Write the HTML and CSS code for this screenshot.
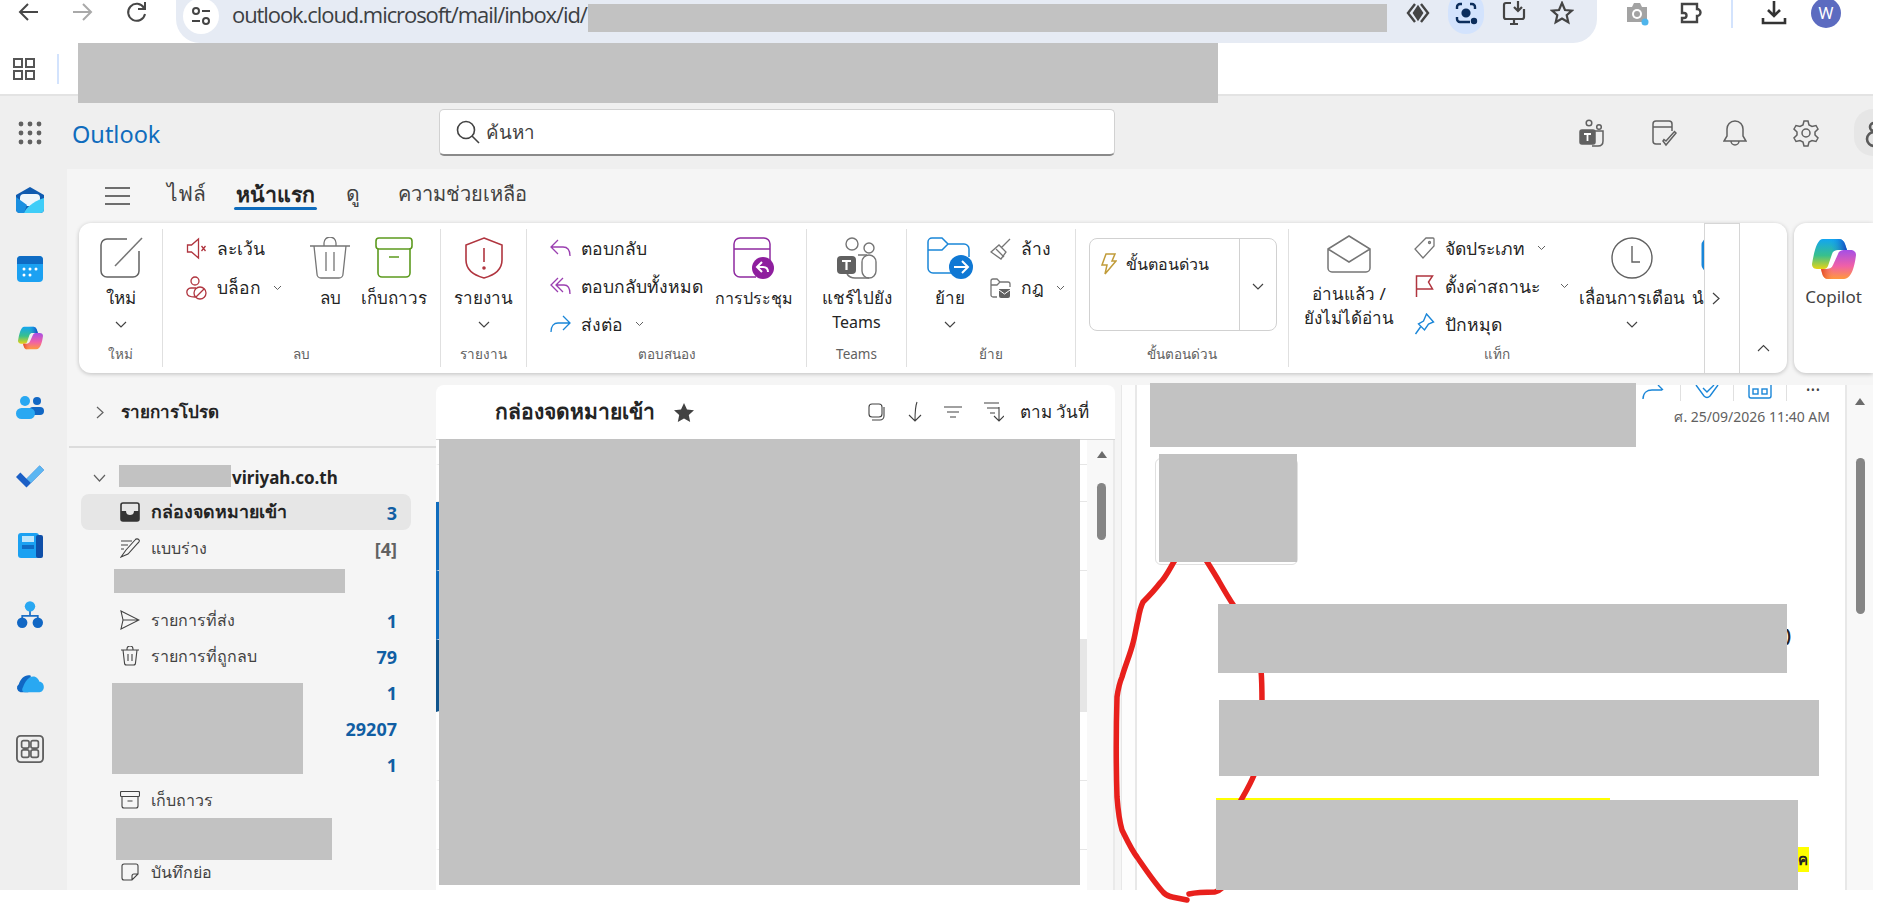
FILE: index.html
```html
<!DOCTYPE html>
<html lang="th">
  <head>
    <meta charset="UTF-8" />
    <title>Outlook</title>
    <link rel="stylesheet" href="styles.css">
  </head>
  <body>
    <svg class="defs" width="0" height="0">
      <defs>
        <linearGradient id="cpA" x1="0" y1="0" x2="0" y2="1"><stop offset="0" stop-color="#12a5f2"/><stop offset=".55" stop-color="#38c08c"/><stop offset="1" stop-color="#e8d414"/></linearGradient>
        <linearGradient id="cpB" x1="0" y1="0" x2="0" y2="1"><stop offset="0" stop-color="#a44fe6"/><stop offset=".55" stop-color="#f060a8"/><stop offset="1" stop-color="#ff9a3c"/></linearGradient>
        <linearGradient id="cpC" x1="0" y1="0" x2="1" y2="0"><stop offset="0" stop-color="#e0481f"/><stop offset="1" stop-color="#ff8a4a" stop-opacity="0"/></linearGradient>
        <linearGradient id="cpD" x1="0" y1="0" x2="1" y2="0"><stop offset="0" stop-color="#12a5f2" stop-opacity="0"/><stop offset="1" stop-color="#1540c0"/></linearGradient>
        <symbol id="copilot" viewBox="0 0 44 40">
          <path d="M11 0H27c3 0 5 2 6 5l2 6H26c-3 0-5 1-6 4l-4 12c-1 2-2 3-4 3H5c-4 0-5-3-5-5C2 13 5 0 11 0z" fill="url(#cpA)"/>
          <path d="M18 0H27c3 0 5 2 6 5l2 6H26c-3 0-4 1-5 2z" fill="url(#cpD)"/>
          <path d="M33 11h5c4 0 6 2 6 5-1 9-4 24-12 24H16c-3 0-5-2-6-6l-1-4h5c3 0 6-1 7-4l5-11c1-3 3-4 7-4z" fill="url(#cpB)"/>
          <path d="M9 30h5c3 0 6-1 7-4l1-2v16h-6c-3 0-5-2-6-6z" fill="url(#cpC)"/>
        </symbol>
      </defs>
    </svg>

    <div class="shot">
      <header class="toolbar">
        <svg class="tb-btn" viewBox="0 0 24 24" fill="none" stroke="#474747" stroke-width="2"><path d="M21 12H4M11 4l-8 8 8 8"/></svg>
        <svg class="tb-btn" viewBox="0 0 24 24" fill="none" stroke="#a9a9a9" stroke-width="2"><path d="M3 12h17M13 4l8 8-8 8"/></svg>
        <svg class="tb-btn" viewBox="0 0 24 24" fill="none" stroke="#474747" stroke-width="2"><path d="M19 8a8.500 8.500 0 1 0 1 6M20 2v7h-7"/></svg>
        <div class="omnibox">
          <span class="site-info">
            <svg width="20" height="20" viewBox="0 0 20 20" fill="none" stroke="#444" stroke-width="2"><circle cx="5" cy="5" r="3"/><path d="M11 5h8M1 15h8"/><circle cx="15" cy="15" r="3"/></svg>
          </span>
          <span class="url">outlook.cloud.microsoft/mail/inbox/id/</span>
          <span class="omni-icons">
            <svg width="24" height="24" viewBox="0 0 24 24" fill="none" stroke="#444" stroke-width="2.400"><path d="M9 3 2 12l7 9M15 3l7 9-7 9"/><path d="M12 6l4 6-4 6-4-6z" fill="#444"/></svg>
            <span class="lens"><svg width="24" height="24" viewBox="0 0 24 24" fill="none" stroke="#0b2d5c" stroke-width="2.400"><path d="M3 8V6a3 3 0 0 1 3-3h2M16 3h2a3 3 0 0 1 3 3v2M3 16v2a3 3 0 0 0 3 3h10"/><circle cx="12" cy="12" r="3.400" fill="#0b2d5c"/><circle cx="20" cy="20" r="2" fill="#0b2d5c"/></svg></span>
            <svg width="24" height="26" viewBox="0 0 24 26" fill="none" stroke="#444" stroke-width="2.200"><path d="M9 3H4a2 2 0 0 0-2 2v12a2 2 0 0 0 2 2h16a2 2 0 0 0 2-2V9M8 24h8M12 19v5M16 1v9M12 7l4 4 4-4"/></svg>
            <svg width="24" height="24" viewBox="0 0 24 24" fill="none" stroke="#444" stroke-width="2.200"><path d="M12 2l3 7 7 .6-5.300 4.600 1.600 7L12 17.500 5.700 21.200l1.600-7L2 9.600 9 9z"/></svg>
          </span>
        </div>
        <span class="tb-right">
          <svg width="24" height="26" viewBox="0 0 24 26"><path d="M2 7h5l2-4h6l2 4h5v15H2z" fill="#a3a3a3"/><circle cx="12" cy="14" r="5" fill="#fff"/><circle cx="12" cy="14" r="3" fill="#a3a3a3"/><circle cx="20" cy="22" r="3.500" fill="#4fb5ec"/></svg>
          <svg width="24" height="24" viewBox="0 0 24 24" fill="none" stroke="#444" stroke-width="2.400"><path d="M3 3h15v5a3 3 0 0 1 0 7v6H3v-4h2a2.500 2.500 0 0 0 0-5H3z"/></svg>
          <span class="tb-sep"></span>
          <svg width="26" height="26" viewBox="0 0 26 26" fill="none" stroke="#333" stroke-width="2.600"><path d="M13 1v15M7 10l6 6 6-6M2 18v5h22v-5"/></svg>
          <span class="avatar">W</span>
        </span>
      </header>

      <nav class="bookmarks">
        <svg width="22" height="22" viewBox="0 0 22 22" fill="none" stroke="#555" stroke-width="2"><rect x="1" y="1" width="8" height="8"/><rect x="13" y="1" width="8" height="8"/><rect x="1" y="13" width="8" height="8"/><rect x="13" y="13" width="8" height="8"/></svg>
        <span class="bm-sep"></span>
      </nav>

      <div class="app-header">
        <svg class="waffle" width="24" height="24" viewBox="0 0 24 24" fill="#616161"><circle cx="3" cy="3" r="2.400"/><circle cx="12" cy="3" r="2.400"/><circle cx="21" cy="3" r="2.400"/><circle cx="3" cy="12" r="2.400"/><circle cx="12" cy="12" r="2.400"/><circle cx="21" cy="12" r="2.400"/><circle cx="3" cy="21" r="2.400"/><circle cx="12" cy="21" r="2.400"/><circle cx="21" cy="21" r="2.400"/></svg>
        <span class="brand">Outlook</span>
        <div class="search">
          <svg width="24" height="24" viewBox="0 0 24 24" fill="none" stroke="#424242" stroke-width="1.600"><circle cx="10" cy="10" r="8.500"/><path d="M16 16l7 7"/></svg>
          <span>ค้นหา</span>
        </div>
        <div class="head-icons">
          <svg width="26" height="28" viewBox="0 0 26 28" fill="none" stroke="#616161" stroke-width="1.500"><circle cx="10" cy="4" r="2.800"/><circle cx="20" cy="8" r="2.300"/><path d="M15 12h9v10c0 3-2 5-5 5h-6"/><rect x="1" y="11" width="15" height="14" rx="2" fill="#616161"/><path d="M5 15h7M8.500 15v7" stroke="#fff" stroke-width="1.800"/></svg>
          <svg width="26" height="28" viewBox="0 0 26 28" fill="none" stroke="#616161" stroke-width="1.500"><path d="M10 25H5a3 3 0 0 1-3-3V5a3 3 0 0 1 3-3h13a3 3 0 0 1 3 3v7M2 8h19"/><path d="M12 22l3 4 10-12-1.500-1.500L15 22l-2-1.500z"/></svg>
          <svg width="24" height="28" viewBox="0 0 24 28" fill="none" stroke="#616161" stroke-width="1.500"><path d="M12 2c-5 0-8 4-8 8v7l-3 5h22l-3-5v-7c0-4-3-8-8-8zM8 22a4 4 0 0 0 8 0"/></svg>
          <svg width="26" height="28" viewBox="0 0 26 28" fill="none" stroke="#616161" stroke-width="1.500"><circle cx="13" cy="14" r="4"/><path d="M11 2h4l1 4 3 1.500 4-1 2 3.500-3 3v3l3 3-2 3.500-4-1-3 1.500-1 4h-4l-1-4-3-1.500-4 1-2-3.500 3-3v-3l-3-3 2-3.500 4 1L10 6z"/></svg>
        </div>
        <div class="me-btn">
          <svg width="30" height="30" viewBox="0 0 30 30" fill="none" stroke="#5a5a5a" stroke-width="2.600"><circle cx="15" cy="9" r="4"/><circle cx="15" cy="21" r="7"/></svg>
        </div>
      </div>

      <div class="app-body">
        <aside class="rail">
          <svg width="28" height="26" viewBox="0 0 28 26"><path d="M14 0 28 8v14a4 4 0 0 1-4 4H4a4 4 0 0 1-4-4V8z" fill="#0f5bb0"/><rect x="4" y="7" width="20" height="12" rx="4" fill="#eef6fc"/><path d="M0 10l11 8-3 8H4a4 4 0 0 1-4-4z" fill="#1a8fe0"/><path d="M28 11v11a4 4 0 0 1-4 4H8c2-5 8-11 20-15z" fill="#3fcdf8"/></svg>
          <svg width="26" height="26" viewBox="0 0 26 26"><rect width="26" height="26" rx="4" fill="#1ba1f2"/><path d="M0 8V4a4 4 0 0 1 4-4h18a4 4 0 0 1 4 4v4z" fill="#0f6cc4"/><g fill="#fff"><circle cx="7" cy="13" r="1.500"/><circle cx="13" cy="13" r="1.500"/><circle cx="19" cy="13" r="1.500"/><circle cx="7" cy="19" r="1.500"/><circle cx="13" cy="19" r="1.500"/></g></svg>
          <svg width="25" height="24"><use href="#copilot"/></svg>
          <svg width="28" height="23" viewBox="0 0 28 23"><circle cx="21" cy="5" r="4" fill="#1167c4"/><rect x="13" y="11" width="15" height="8" rx="4" fill="#1167c4"/><circle cx="9" cy="5" r="5" fill="#29a8f2"/><rect x="0" y="12" width="19" height="11" rx="5.500" fill="#29a8f2"/></svg>
          <svg width="28" height="24" viewBox="0 0 32 26"><path d="M0 14l5-5 7 7L27 1l5 5-20 20z" fill="#1b5fc6"/><path d="M12 16 27 1l5 5-15 15z" fill="#5cb6f2"/></svg>
          <svg width="25" height="25" viewBox="0 0 25 25"><rect width="21" height="25" rx="3" fill="#1ba1f2"/><rect x="18" y="2" width="7" height="23" rx="2" fill="#0f4fa8"/><rect x="4" y="3" width="12" height="6" fill="#bfe6fb"/><rect x="4" y="12" width="12" height="4" fill="#0f6cc4"/></svg>
          <svg width="26" height="28" viewBox="0 0 30 32"><path d="M15 8v8M6 22v-5h18v5" fill="none" stroke="#1b6fc6" stroke-width="2"/><circle cx="15" cy="6" r="6" fill="#29a8f2"/><circle cx="6" cy="25" r="6" fill="#1167c4"/><circle cx="24" cy="25" r="6" fill="#1167c4"/></svg>
          <svg width="28" height="19" viewBox="0 0 32 22"><path d="M5 21a5 5 0 0 1-2-9C5 5 11 0 17 2l-3 19z" fill="#1167c4"/><path d="M10 21c-3 0-4-3-2-6 2-5 6-13 13-12 3 1 5 3 6 6 3 0 5 3 5 6s-2 6-5 6z" fill="#29a8f2"/></svg>
          <svg class="rail-apps" width="28" height="28" viewBox="0 0 30 30" fill="none" stroke="#616161" stroke-width="1.800"><rect x="1" y="1" width="28" height="28" rx="4" stroke-width="2"/><rect x="6" y="6" width="8" height="8" rx="2"/><rect x="16" y="6" width="8" height="8" rx="2"/><rect x="6" y="16" width="8" height="8" rx="2"/><rect x="16" y="16" width="8" height="8" rx="2"/></svg>
        </aside>

        <main class="main">
          <div class="tabs">
            <svg class="burger" width="25" height="18" viewBox="0 0 25 18" stroke="#424242" stroke-width="1.500"><path d="M0 1h25M0 9h25M0 17h25"/></svg>
            <span class="tab tab-file">ไฟล์</span>
            <span class="tab tab-home">หน้าแรก</span>
            <span class="tab tab-view">ดู</span>
            <span class="tab tab-help">ความช่วยเหลือ</span>
          </div>

          <div class="ribbon-row">
            <section class="ribbon">
              <div class="group g-new">
                <div class="group-body">
                  <div class="big w-new">
                    <svg class="big-icon" width="44" height="42" viewBox="0 0 44 42" fill="none" stroke="#616161" stroke-width="1.500"><path d="M28 2H8a6 6 0 0 0-6 6v26a6 6 0 0 0 6 6h26a6 6 0 0 0 6-6V14"/><path d="M43 1 16 29" stroke="#757575"/></svg>
                    <span class="big-label">ใหม่</span>
                    <svg class="chev" width="12" height="8" viewBox="0 0 12 8"><path d="M1 1l5 5 5-5"/></svg>
                  </div>
                </div>
                <div class="group-name">ใหม่</div>
              </div>

              <div class="group g-delete">
                <div class="group-body">
                  <div class="stack s-delete">
                    <div class="cmd"><svg width="20" height="24" viewBox="0 0 20 24" fill="none" stroke="#b0353f" stroke-width="1.300"><path d="M1 8v7h4l7 6V2L5 8z"/><path d="M15 9l4 5M19 9l-4 5"/></svg><span>ละเว้น</span></div>
                    <div class="cmd"><svg width="21" height="24" viewBox="0 0 21 24" fill="none" stroke="#b0353f" stroke-width="1.300"><circle cx="9" cy="5" r="4"/><path d="M10 12H5a4 4 0 0 0-4 5c0 3 3 4 8 4"/><circle cx="14" cy="17" r="6"/><path d="M10 21l8-8"/></svg><span>บล็อก</span><svg class="chev-sm" width="9" height="6" viewBox="0 0 9 6"><path d="M1 1l3.500 3.500L8 1"/></svg></div>
                  </div>
                  <div class="big w-trash">
                    <svg class="big-icon" width="40" height="42" viewBox="0 0 40 42" fill="none" stroke="#757575" stroke-width="1.300"><path d="M0 9h40M14 9V6a6 6 0 0 1 12 0v3M4 9l3 28a4 4 0 0 0 4 4h18a4 4 0 0 0 4-4l3-28M16 15v19M24 15v19"/></svg>
                    <span class="big-label">ลบ</span>
                  </div>
                  <div class="big w-arch">
                    <svg class="big-icon" width="38" height="42" viewBox="0 0 38 42" fill="none" stroke="#5c9a1e" stroke-width="1.600"><rect x="1" y="1" width="36" height="11" rx="3"/><path d="M3 12v24a4 4 0 0 0 4 4h24a4 4 0 0 0 4-4V12M14 20h10"/></svg>
                    <span class="big-label">เก็บถาวร</span>
                  </div>
                </div>
                <div class="group-name">ลบ</div>
              </div>

              <div class="group g-report">
                <div class="group-body">
                  <div class="big w-report">
                    <svg class="big-icon" width="40" height="42" viewBox="0 0 40 42" fill="none" stroke="#b0353f" stroke-width="1.600"><path d="M20 1l18 7v15c0 9-7 15-18 18C9 38 2 32 2 23V8z"/><path d="M20 11v14"/><circle cx="20" cy="31" r="1" fill="#b0353f"/></svg>
                    <span class="big-label">รายงาน</span>
                    <svg class="chev" width="12" height="8" viewBox="0 0 12 8"><path d="M1 1l5 5 5-5"/></svg>
                  </div>
                </div>
                <div class="group-name">รายงาน</div>
              </div>

              <div class="group g-respond">
                <div class="group-body">
                  <div class="stack s-respond">
                    <div class="cmd"><svg width="21" height="20" viewBox="0 0 21 20" fill="none" stroke="#9a3fb0" stroke-width="1.300"><path d="M8 2 1 9l7 7M1 9h12c4 0 7 3 7 9"/></svg><span>ตอบกลับ</span></div>
                    <div class="cmd"><svg width="21" height="20" viewBox="0 0 21 20" fill="none" stroke="#9a3fb0" stroke-width="1.300"><path d="M8 2 1 9l7 7M13 2 6 9l7 7M6 9h8c4 0 6 3 6 9"/></svg><span>ตอบกลับทั้งหมด</span></div>
                    <div class="cmd"><svg width="21" height="20" viewBox="0 0 21 20" fill="none" stroke="#1a86d8" stroke-width="1.300"><path d="M13 2l7 7-7 7M20 9H8c-4 0-7 3-7 9"/></svg><span>ส่งต่อ</span><svg class="chev-sm" width="9" height="6" viewBox="0 0 9 6"><path d="M1 1l3.500 3.500L8 1"/></svg></div>
                  </div>
                  <div class="big w-meet">
                    <svg class="big-icon" width="42" height="42" viewBox="0 0 42 42"><g fill="none" stroke="#8e2aa0" stroke-width="1.500"><path d="M23 40H7a6 6 0 0 1-6-6V7a6 6 0 0 1 6-6h24a6 6 0 0 1 6 6v17M1 12h36"/></g><circle cx="30" cy="31" r="11" fill="#8e1e9e"/><path d="M29 25l-5 5 5 5M24 30h6c3 0 5 2 5 5" fill="none" stroke="#fff" stroke-width="2"/></svg>
                    <span class="big-label strong">การประชุม</span>
                  </div>
                </div>
                <div class="group-name">ตอบสนอง</div>
              </div>

              <div class="group g-teams">
                <div class="group-body">
                  <div class="big w-teams">
                    <svg class="big-icon" width="40" height="42" viewBox="0 0 40 42" fill="none" stroke="#757575" stroke-width="1.400"><circle cx="15" cy="7" r="6"/><circle cx="32" cy="11" r="5"/><rect x="25" y="18" width="14" height="23" rx="7"/><path d="M21 18h9M10 37c2 3 4 4 8 4h14"/><rect y="19" width="19" height="18" rx="4" fill="#616161" stroke="none"/><path d="M5 24h9M9.500 24v9" stroke="#fff" stroke-width="2.200"/></svg>
                    <span class="big-label">แชร์ไปยัง</span>
                    <span class="big-label lat">Teams</span>
                  </div>
                </div>
                <div class="group-name">Teams</div>
              </div>

              <div class="group g-move">
                <div class="group-body">
                  <div class="big w-move">
                    <svg class="big-icon" width="46" height="42" viewBox="0 0 46 42"><path d="M26 36H6a5 5 0 0 1-5-5V5a4 4 0 0 1 4-4h10l6 6-6 6H1M21 7h16a5 5 0 0 1 5 5v8" fill="none" stroke="#1a86d8" stroke-width="1.500"/><circle cx="34" cy="30" r="12" fill="#0f78d4"/><path d="M27 30h14M35 24l6 6-6 6" fill="none" stroke="#fff" stroke-width="2"/></svg>
                    <span class="big-label">ย้าย</span>
                    <svg class="chev" width="12" height="8" viewBox="0 0 12 8"><path d="M1 1l5 5 5-5"/></svg>
                  </div>
                  <div class="stack s-move">
                    <div class="cmd"><svg width="21" height="22" viewBox="0 0 21 22" fill="none" stroke="#757575" stroke-width="1.300"><path d="M20 1 11 10M1 14l8-7 7 7-5 7z"/><path d="M6 11l8 8"/></svg><span>ล้าง</span></div>
                    <div class="cmd"><svg width="21" height="20" viewBox="0 0 21 20"><path d="M7 19H3a2 2 0 0 1-2-2V3a2 2 0 0 1 2-2h4l3 3-3 3H1M10 4h8a2 2 0 0 1 2 2v3" fill="none" stroke="#757575" stroke-width="1.300"/><path d="M9 11h11v7a2 2 0 0 1-2 2h-7a2 2 0 0 1-2-2z" fill="#616161"/><path d="M9 12l5.500 4 5.500-4" fill="none" stroke="#fff"/></svg><span>กฎ</span><svg class="chev-sm" width="9" height="6" viewBox="0 0 9 6"><path d="M1 1l3.500 3.500L8 1"/></svg></div>
                  </div>
                </div>
                <div class="group-name">ย้าย</div>
              </div>

              <div class="group g-quick">
                <div class="group-body">
                  <div class="quick-box">
                    <div class="quick-list">
                      <svg width="16" height="22" viewBox="0 0 16 22" fill="none" stroke="#c19c3a" stroke-width="1.500"><path d="M5 1h9l-3 7h4L4 21l2-9H1z"/></svg>
                      <span>ขั้นตอนด่วน</span>
                    </div>
                    <div class="quick-more"><svg class="chev" width="12" height="8" viewBox="0 0 12 8"><path d="M1 1l5 5 5-5"/></svg></div>
                  </div>
                </div>
                <div class="group-name">ขั้นตอนด่วน</div>
              </div>

              <div class="group g-tags">
                <div class="group-body">
                  <div class="big w-read">
                    <svg class="big-icon env" width="44" height="38" viewBox="0 0 44 38" fill="none" stroke="#757575" stroke-width="1.500"><path d="M1 14 22 1l21 13v19a4 4 0 0 1-4 4H5a4 4 0 0 1-4-4zM1 14l21 13 21-13"/></svg>
                    <span class="big-label">อ่านแล้ว /</span>
                    <span class="big-label">ยังไม่ได้อ่าน</span>
                  </div>
                  <div class="stack s-tags">
                    <div class="cmd"><svg width="21" height="22" viewBox="0 0 21 22" fill="none" stroke="#757575" stroke-width="1.300"><path d="M12 1h7a1 1 0 0 1 1 1v7L9 21 1 12z"/><circle cx="15.500" cy="5.500" r="1"/></svg><span>จัดประเภท</span><svg class="chev-sm" width="9" height="6" viewBox="0 0 9 6"><path d="M1 1l3.500 3.500L8 1"/></svg></div>
                    <div class="cmd"><svg width="18" height="22" viewBox="0 0 18 22" fill="none" stroke="#b0353f" stroke-width="1.500"><path d="M1 22V1h16l-4 6 4 7H1"/></svg><span>ตั้งค่าสถานะ</span><svg class="chev-sm far" width="9" height="6" viewBox="0 0 9 6"><path d="M1 1l3.500 3.500L8 1"/></svg></div>
                    <div class="cmd"><svg width="20" height="22" viewBox="0 0 20 22" fill="none" stroke="#1a86d8" stroke-width="1.400"><path d="M12 1l7 8-5 2-4 6-6-6 5-3zM6 14l-5 7"/></svg><span>ปักหมุด</span></div>
                  </div>
                  <div class="big w-snooze">
                    <svg class="big-icon" width="42" height="42" viewBox="0 0 42 42" fill="none" stroke="#616161" stroke-width="1.400"><circle cx="21" cy="21" r="20"/><path d="M21 9v16h8"/></svg>
                    <span class="big-label">เลื่อนการเตือน</span>
                    <svg class="chev" width="12" height="8" viewBox="0 0 12 8"><path d="M1 1l5 5 5-5"/></svg>
                  </div>
                  <div class="big w-next">
                    <svg class="big-icon" width="42" height="42" viewBox="0 0 42 42" fill="none" stroke="#1a86d8" stroke-width="3"><rect x="2" y="3" width="36" height="30" rx="5"/></svg>
                    <span class="big-label">นำกลับ</span>
                  </div>
                </div>
                <div class="group-name">แท็ก</div>
              </div>

              <div class="ribbon-scroll"><svg width="9" height="13" viewBox="0 0 9 13" fill="none" stroke="#424242" stroke-width="1.200"><path d="M1 1l6 5.500L1 12"/></svg></div>
              <div class="ribbon-collapse"><svg width="13" height="8" viewBox="0 0 13 8" fill="none" stroke="#424242" stroke-width="1.100"><path d="M1 7l5.500-5.500L12 7"/></svg></div>
            </section>

            <section class="copilot-card">
              <svg width="44" height="40"><use href="#copilot"/></svg>
              <span>Copilot</span>
            </section>
          </div>

          <div class="panes">
            <aside class="folders">
              <div class="fav-row">
                <svg width="9" height="13" viewBox="0 0 9 13" fill="none" stroke="#616161" stroke-width="1.200"><path d="M1 1l6 5.500L1 12"/></svg>
                <span>รายการโปรด</span>
              </div>
              <div class="account-row">
                <svg width="13" height="9" viewBox="0 0 13 9" fill="none" stroke="#616161" stroke-width="1.200"><path d="M1 1l5.500 6L12 1"/></svg>
                <span>viriyah.co.th</span>
              </div>
              <ul class="folder-list">
                <li class="folder active">
                  <svg width="20" height="20" viewBox="0 0 20 20"><path d="M3 1h14a2 2 0 0 1 2 2v14a2 2 0 0 1-2 2H3a2 2 0 0 1-2-2V3a2 2 0 0 1 2-2z" fill="none" stroke="#333" stroke-width="1.600"/><path d="M1 9h5c0 3 2 4 4 4s4-1 4-4h5v8a2 2 0 0 1-2 2H3a2 2 0 0 1-2-2z" fill="#333"/></svg>
                  <span class="folder-name">กล่องจดหมายเข้า</span><span class="count">3</span>
                </li>
                <li class="folder">
                  <svg width="20" height="20" viewBox="0 0 20 20" fill="none" stroke="#424242" stroke-width="1.100"><path d="M19 2c-1-1.500-3-1.500-4 0L6 12l-5 7 7-3 10-11c1-1 2-2 1-3zM1 3h11M1 7h7M1 11h3"/></svg>
                  <span class="folder-name">แบบร่าง</span><span class="count muted">[4]</span>
                </li>
                <li class="folder"></li>
                <li class="folder">
                  <svg width="20" height="20" viewBox="0 0 20 20" fill="none" stroke="#424242" stroke-width="1.100"><path d="M1 1l18 9L1 19l2-9zM3 10h16"/></svg>
                  <span class="folder-name">รายการที่ส่ง</span><span class="count">1</span>
                </li>
                <li class="folder">
                  <svg width="20" height="20" viewBox="0 0 20 20" fill="none" stroke="#424242" stroke-width="1.100"><path d="M1 4h18M7 4V3a3 3 0 0 1 6 0v1M3 4l1.500 13a2 2 0 0 0 2 2h7a2 2 0 0 0 2-2L17 4M8 8v7M12 8v7"/></svg>
                  <span class="folder-name">รายการที่ถูกลบ</span><span class="count">79</span>
                </li>
                <li class="folder"><span class="folder-name"></span><span class="count">1</span></li>
                <li class="folder"><span class="folder-name"></span><span class="count">29207</span></li>
                <li class="folder"><span class="folder-name"></span><span class="count">1</span></li>
                <li class="folder">
                  <svg width="20" height="18" viewBox="0 0 20 18" fill="none" stroke="#424242" stroke-width="1.100"><rect x=".5" y=".5" width="19" height="5" rx="1"/><path d="M2 5.500V15a2 2 0 0 0 2 2h12a2 2 0 0 0 2-2V5.500M7.500 10h5"/></svg>
                  <span class="folder-name">เก็บถาวร</span>
                </li>
                <li class="folder"></li>
                <li class="folder">
                  <svg width="18" height="18" viewBox="0 0 18 18" fill="none" stroke="#424242" stroke-width="1.100"><path d="M11 17H3a2 2 0 0 1-2-2V3a2 2 0 0 1 2-2h12a2 2 0 0 1 2 2v8zM11 17v-4a2 2 0 0 1 2-2h4"/></svg>
                  <span class="folder-name">บันทึกย่อ</span>
                </li>
              </ul>
            </aside>

            <section class="msg-list">
              <div class="msg-head">
                <span class="msg-title">กล่องจดหมายเข้า</span>
                <svg class="star" width="20" height="19" viewBox="0 0 20 19" fill="#424242"><path d="M10 0l3 6.500 7 .8-5.200 4.700L16.200 19 10 15.400 3.800 19l1.400-7L0 7.300l7-.8z"/></svg>
                <div class="msg-tools">
                  <svg width="18" height="18" viewBox="0 0 18 18" fill="none" stroke="#424242" stroke-width="1.100"><rect x="1" y="1" width="13" height="13" rx="3"/><path d="M16 4v9a4 4 0 0 1-4 4H4"/></svg>
                  <svg width="14" height="22" viewBox="0 0 14 22" fill="none" stroke="#424242" stroke-width="1.100"><path d="M9 1C7 6 7 12 7 20M1 14l6 6 6-6"/></svg>
                  <svg width="18" height="12" viewBox="0 0 18 12" stroke="#424242" stroke-width="1.100"><path d="M0 1h18M3 6h12M6 11h6"/></svg>
                  <svg width="20" height="20" viewBox="0 0 20 20" fill="none" stroke="#424242" stroke-width="1.100"><path d="M0 1h15M3 6h12M6 11h5M15 5v14M10 14l5 5 5-5"/></svg>
                  <span>ตาม วันที่</span>
                </div>
              </div>
              <div class="msg-body">
                <ul class="msg-rows">
                  <li class="msg r-a"></li>
                  <li class="msg r-b"></li>
                  <li class="msg r-c unread"></li>
                  <li class="msg r-c unread"></li>
                  <li class="msg r-d unread selected"></li>
                  <li class="msg r-c"></li>
                  <li class="msg r-c"></li>
                </ul>
                <div class="scroller list-scroller">
                  <span class="sc-arrow"></span>
                  <span class="sc-thumb"></span>
                </div>
              </div>
            </section>

            <section class="reader">
              <div class="reader-edge"></div>
              <div class="reader-main">
                <div class="read-actions">
                  <span class="act"><svg width="24" height="14" viewBox="0 0 24 14" fill="none" stroke="#1a86d8" stroke-width="1.400"><path d="M1 14c0-6 4-9 9-9h10M16 0l5 5"/></svg></span>
                  <span class="act"><svg width="26" height="14" viewBox="0 0 26 14" fill="none" stroke="#1a86d8" stroke-width="1.400"><path d="M2 0l8 11c2 2 4 2 6 0L24 0M9 3l4 4 7-7"/></svg></span>
                  <span class="act"><svg width="24" height="14" viewBox="0 0 24 14" fill="none" stroke="#1a86d8" stroke-width="1.400"><path d="M1 0v11a2 2 0 0 0 2 2h18a2 2 0 0 0 2-2V0"/><rect x="5" y="4" width="5" height="5"/><rect x="14" y="4" width="5" height="5"/></svg></span>
                  <span class="act act-last"><span class="dots">•••</span></span>
                </div>
                <div class="read-date">ศ. 25/09/2026 11:40 AM</div>
                <div class="logo-box"></div>
                <div class="mail-para"><span class="mail-tail">)</span></div>
                <div class="hl-line"></div>
                <div class="hl-end">ค</div>
              </div>
              <div class="scroller read-scroller">
                <span class="sc-arrow"></span>
                <span class="sc-thumb"></span>
              </div>
            </section>
          </div>
        </main>
      </div>
    </div>

    <!-- pen stroke first, the grey blocks were laid over it -->
    <svg class="pen" width="1899" height="912" viewBox="0 0 1899 912" fill="none" stroke="#e8201c" stroke-width="5.500" stroke-linecap="round" stroke-linejoin="round">
      <path d="M1175 560C1170 568 1166 577 1160 583C1154 591 1149 596 1143 602C1140 608 1139 614 1138 620C1136 628 1135 636 1133 643C1130 655 1125 666 1122 677C1119 684 1118 690 1117 697C1116 730 1116 765 1117 797C1118 810 1119 820 1122 830C1127 840 1131 849 1137 857C1146 870 1154 882 1163 892C1166 896 1169 896 1172 897C1177 898 1182 899 1187 900"/>
      <path d="M1189 894C1198 892 1206 892 1215 892C1218 891 1220 890 1222 888"/>
      <path d="M1206 560C1211 568 1216 576 1220 583C1224 590 1228 597 1234 606"/>
      <path d="M1261 670C1262 681 1262 692 1262 704"/>
      <path d="M1254 775C1250 785 1245 793 1240 802"/>
    </svg>
    <div class="hide h-url"></div>
    <div class="hide h-bookmarks"></div>
    <div class="hide h-account"></div>
    <div class="hide h-folder1"></div>
    <div class="hide h-folder2"></div>
    <div class="hide h-folder3"></div>
    <div class="hide h-list"></div>
    <div class="hide h-sender"></div>
    <div class="hide h-logo"></div>
    <div class="hide h-text1"></div>
    <div class="hide h-text2"></div>
    <div class="hide h-text3"></div>
  </body>
</html>
```

FILE: styles.css
```css
html,
body {
  margin: 0;
  padding: 0;
}
body {
  position: relative;
  width: 1899px;
  height: 912px;
  overflow: hidden;
  font: 16px/1.3 "Noto Sans", "Open Sans", sans-serif;
  color: #242424;
  background-color: #fff;
}
ul {
  margin: 0;
  padding: 0;
  list-style: none;
}
svg {
  display: block;
  flex: none;
}
.defs {
  position: absolute;
}
.shot {
  display: flex;
  flex-direction: column;
  width: 1873px;
  height: 890px;
  overflow: hidden;
}

/* browser chrome */
.toolbar {
  display: flex;
  align-items: center;
  flex: none;
  height: 43px;
}
.tb-btn {
  width: 24px;
  height: 24px;
  margin: -20px 0 0 17px;
}
.tb-btn + .tb-btn {
  margin-left: 29px;
}
.tb-btn + .tb-btn + .tb-btn {
  margin-left: 31px;
}
.omnibox {
  display: flex;
  align-items: center;
  box-sizing: border-box;
  width: 1421px;
  height: 43px;
  margin-left: 27px;
  border-radius: 0 0 24px 24px;
  background-color: #e6ebf4;
}
.site-info {
  display: flex;
  justify-content: center;
  align-items: center;
  width: 36px;
  height: 36px;
  margin: -12px 0 0 7px;
  border-radius: 50%;
  background-color: #fff;
}
.url {
  margin: -16px 0 0 13px;
  font: 22px/26px "Open Sans", sans-serif;
  letter-spacing: -1.08px;
  color: #3c4043;
  white-space: nowrap;
}
.omni-icons {
  display: flex;
  align-items: center;
  gap: 24px;
  margin: -18px 0 0 auto;
  padding-right: 23px;
}
.lens {
  display: flex;
  justify-content: center;
  align-items: center;
  width: 36px;
  height: 42px;
  margin: -6px;
  border-radius: 18px;
  background-color: #d3e3fd;
}
.tb-right {
  display: flex;
  align-items: center;
  gap: 30px;
  margin: -18px 0 0 28px;
}
.tb-sep {
  width: 2px;
  height: 30px;
  margin: 0 -2px;
  background-color: #d3e3fd;
}
.avatar {
  width: 30px;
  height: 30px;
  margin-left: -6px;
  font-size: 16px;
  line-height: 30px;
  text-align: center;
  color: #fff;
  border-radius: 50%;
  background-color: #5c6bc0;
}
.bookmarks {
  display: flex;
  align-items: center;
  flex: none;
  box-sizing: border-box;
  height: 53px;
  padding-left: 13px;
  border-bottom: 2px solid #e3e3e3;
}
.bm-sep {
  width: 2px;
  height: 30px;
  margin-left: 22px;
  background-color: #d3e3fd;
}

/* outlook header */
.app-header {
  display: flex;
  align-items: center;
  flex: none;
  height: 73px;
  background-color: #efefef;
}
.waffle {
  margin-left: 18px;
}
.brand {
  width: 367px;
  margin: 4px 0 0 30px;
  font-size: 23.5px;
  color: #0f6cbd;
}
.search {
  display: flex;
  align-items: center;
  gap: 6px;
  box-sizing: border-box;
  width: 676px;
  height: 47px;
  padding-left: 16px;
  font-size: 18.8px;
  color: #424242;
  border: 1px solid #d1d1d1;
  border-bottom: 2px solid #8a8a8a;
  border-radius: 5px;
  background-color: #fff;
}
.head-icons {
  display: flex;
  align-items: center;
  gap: 46px;
  margin-left: auto;
}
.me-btn {
  display: flex;
  align-items: center;
  overflow: hidden;
  width: 19px;
  height: 47px;
  margin-left: 35px;
  border-radius: 24px 0 0 24px;
  background-color: #e6e6e6;
}
.me-btn svg {
  margin-left: 5px;
}

.app-body {
  display: flex;
  flex: 1;
  min-height: 0;
}
.rail {
  display: grid;
  flex: none;
  grid-auto-rows: 69.2px;
  justify-items: center;
  align-items: center;
  box-sizing: border-box;
  width: 67px;
  margin-top: -4px;
  padding-right: 7px;
  background-color: #efefef;
}
.rail-apps {
  margin-top: -9px;
}
.main {
  display: flex;
  flex-direction: column;
  flex: 1;
  min-width: 0;
  background-color: #f5f5f5;
}

/* tabs */
.tabs {
  display: flex;
  align-items: center;
  flex: none;
  box-sizing: border-box;
  height: 54px;
  padding: 0 0 5px 38px;
  font-size: 21px;
  color: #424242;
}
.burger {
  margin-top: 5px;
}
.tab {
  position: relative;
  white-space: nowrap;
}
.tab-file {
  margin-left: 37px;
}
.tab-home {
  margin-left: 30px;
  font-size: 21.3px;
  font-weight: 700;
  color: #242424;
}
.tab-home:after {
  content: "";
  position: absolute;
  right: -2px;
  bottom: -3px;
  left: -2px;
  height: 3px;
  border-radius: 2px;
  background-color: #0f6cbd;
}
.tab-view {
  margin-left: 31px;
}
.tab-help {
  margin-left: 38px;
  font-size: 20px;
}

/* ribbon */
.ribbon-row {
  display: flex;
  flex: none;
  gap: 7px;
  padding-left: 12px;
}
.ribbon {
  display: flex;
  flex: none;
  overflow: hidden;
  width: 1708px;
  height: 150px;
  border-radius: 12px;
  background-color: #fff;
  box-shadow: 0 1px 4px rgba(0, 0, 0, 0.22);
}
.group {
  display: flex;
  flex-direction: column;
  flex: none;
  box-sizing: border-box;
  overflow: hidden;
  height: 138px;
  margin-top: 6px;
  border-right: 1px solid #e0e0e0;
}
.group-body {
  display: flex;
  flex: 1;
  min-height: 0;
}
.group-name {
  flex: none;
  height: 24px;
  font-size: 13.5px;
  line-height: 22px;
  text-align: center;
  color: #616161;
}
.g-new {
  width: 84px;
}
.g-delete {
  width: 278px;
}
.g-report {
  width: 86px;
}
.g-respond {
  width: 280px;
}
.g-teams {
  width: 100px;
}
.g-move {
  width: 169px;
}
.g-quick {
  width: 213px;
}
.g-tags {
  width: 415px;
  border-right: 0;
}
.big {
  display: flex;
  flex-direction: column;
  align-items: center;
  flex: none;
  font-size: 17px;
}
.big-icon {
  margin-top: 8px;
  margin-bottom: 7px;
}
.big-icon.env {
  margin-top: 6px;
  margin-bottom: 9px;
}
.big-label {
  height: 24px;
  line-height: 24px;
  white-space: nowrap;
}
.big-label.strong {
  font-size: 16px;
  font-weight: 500;
}
.big-label.lat {
  font-size: 16px;
}
.chev {
  margin-top: 11px;
  fill: none;
  stroke: #424242;
  stroke-width: 1.2;
}
.chev-sm {
  margin-left: 12px;
  fill: none;
  stroke: #616161;
  stroke-width: 1;
}
.chev-sm.far {
  margin-left: 20px;
}
.w-new {
  width: 84px;
}
.w-trash {
  width: 60px;
}
.w-arch {
  width: 68px;
}
.w-report {
  width: 85px;
}
.w-meet {
  width: 80px;
}
.w-teams {
  width: 99px;
}
.w-move {
  width: 60px;
  margin-left: 13px;
}
.w-read {
  width: 120px;
}
.w-snooze {
  width: 104px;
  margin-left: 16px;
}
/* only a sliver of this button shows before the ribbon scroll box */
.w-next {
  align-items: flex-start;
  width: 42px;
  margin-left: 17px;
}
.w-next .big-label {
  margin-left: -9px;
}
.stack {
  display: flex;
  flex-direction: column;
  flex: none;
  font-size: 17.5px;
}
.s-delete {
  width: 114px;
  padding-left: 23px;
}
.s-respond {
  width: 164px;
  padding-left: 23px;
}
.s-move {
  padding-left: 10px;
}
.s-tags {
  width: 150px;
  padding-left: 5px;
}
.cmd {
  display: flex;
  align-items: center;
  height: 39px;
  white-space: nowrap;
}
.cmd > svg:first-child {
  width: 21px;
  margin-right: 10px;
}
.quick-box {
  display: flex;
  box-sizing: border-box;
  width: 188px;
  height: 93px;
  margin: 9px 0 0 13px;
  border: 1px solid #d1d1d1;
  border-radius: 8px;
}
.quick-list {
  display: flex;
  align-items: flex-start;
  flex: 1;
  gap: 9px;
  padding: 14px 0 0 11px;
  font-size: 16px;
  line-height: 22px;
}
.quick-more {
  display: flex;
  justify-content: center;
  align-items: center;
  width: 36px;
  border-left: 1px solid #d1d1d1;
}
.quick-more .chev {
  margin: 4px 0 0;
}
.ribbon-scroll {
  display: flex;
  align-items: center;
  flex: none;
  box-sizing: border-box;
  width: 36px;
  padding-left: 7px;
  border: 1px solid #d6d6d6;
  border-bottom: 0;
  background-color: #fff;
}
.ribbon-collapse {
  flex: 1;
  padding: 121px 0 0 17px;
}
.copilot-card {
  display: flex;
  flex-direction: column;
  align-items: center;
  box-sizing: border-box;
  width: 79px;
  height: 150px;
  padding-top: 16px;
  font-size: 17px;
  color: #424242;
  border-radius: 12px 0 0 12px;
  background-color: #fff;
  box-shadow: 0 1px 4px rgba(0, 0, 0, 0.22);
}
.copilot-card span {
  margin-top: 7px;
}

/* three panes */
.panes {
  display: flex;
  flex: 1;
  min-height: 0;
  margin-top: 12px;
}
.folders {
  flex: none;
  width: 369px;
  overflow: hidden;
}
.fav-row {
  display: flex;
  align-items: center;
  gap: 16px;
  box-sizing: border-box;
  height: 63px;
  margin-left: 2px;
  padding: 0 0 7px 27px;
  font-size: 17px;
  font-weight: 600;
  border-bottom: 2px solid #dcdcdc;
}
.account-row {
  display: flex;
  align-items: center;
  box-sizing: border-box;
  height: 46px;
  padding: 15px 0 0 26px;
  font-size: 17px;
  font-weight: 700;
}
.account-row span {
  margin-left: 126px;
}
.folder-list {
  width: 330px;
  margin-left: 14px;
}
.folder {
  display: flex;
  align-items: center;
  box-sizing: border-box;
  height: 36px;
  padding: 0 14px 0 39px;
  font-size: 16px;
  color: #424242;
}
.folder > svg {
  width: 20px;
}
.folder.active {
  border-radius: 8px;
  font-size: 17.8px;
  font-weight: 700;
  color: #242424;
  background-color: #e6e6e6;
}
.folder-name {
  margin-left: 11px;
}
.count {
  margin: 4px 0 0 auto;
  font-size: 18px;
  font-weight: 700;
  color: #115ea3;
}
.count.muted {
  color: #616161;
}

.msg-list {
  display: flex;
  flex-direction: column;
  flex: none;
  width: 679px;
  overflow: hidden;
  border-radius: 8px 8px 0 0;
  background-color: #fff;
}
.msg-head {
  display: flex;
  align-items: center;
  flex: none;
  box-sizing: border-box;
  height: 55px;
  padding-left: 59px;
  border-bottom: 1px solid #d6d6d6;
}
.msg-title {
  font-size: 21px;
  font-weight: 700;
}
.star {
  margin-left: 19px;
}
.msg-tools {
  display: flex;
  align-items: center;
  gap: 22px;
  margin-left: auto;
  padding-right: 26px;
  font-size: 17px;
}
.msg-tools span {
  margin-left: -6px;
}
.msg-body {
  display: flex;
  flex: 1;
  min-height: 0;
}
.msg-rows {
  flex: 1;
}
.msg {
  box-sizing: border-box;
  border-bottom: 1px solid #e6e6e6;
  border-left: 3px solid transparent;
}
.r-a {
  height: 25px;
}
.r-b {
  height: 37px;
}
.r-c {
  height: 69px;
}
.r-d {
  height: 72px;
}
.unread {
  border-left-color: #0f6cbd;
}
.selected {
  border-left-color: #0f548c;
  background-color: #e6e6e6;
}
.scroller {
  display: flex;
  flex-direction: column;
  align-items: center;
  flex: none;
  background-color: #f8f8f8;
}
.list-scroller {
  box-sizing: border-box;
  width: 28px;
  padding-top: 11px;
  padding-left: 3px;
  border-right: 2px solid #eaeaea;
}
.sc-arrow {
  width: 0;
  height: 0;
  border: 5px solid transparent;
  border-top: 0;
  border-bottom: 7px solid #6b6b6b;
}
.sc-thumb {
  width: 9px;
  height: 57px;
  margin-top: 25px;
  border-radius: 5px;
  background-color: #858585;
}

.reader {
  display: flex;
  flex: none;
  width: 752px;
  margin-left: 6px;
  border-radius: 8px 8px 0 0;
  background-color: #fff;
}
.reader-edge {
  flex: none;
  box-sizing: border-box;
  width: 14px;
  border-left: 1px solid #e8e8e8;
  background-color: #fdfdfd;
}
.reader-main {
  flex: 1;
  min-width: 0;
  overflow: hidden;
  border-left: 2px solid #e8e8e8;
}
.read-actions {
  display: flex;
  justify-content: flex-end;
  align-items: flex-start;
  height: 16px;
  padding-right: 5px;
}
.act {
  display: flex;
  justify-content: center;
  box-sizing: border-box;
  width: 53px;
  height: 16px;
  border-right: 1px solid #e0e0e0;
}
.act-last {
  border-right: 0;
}
.dots {
  font-size: 10px;
  line-height: 10px;
  letter-spacing: 1px;
  color: #424242;
}
.read-date {
  margin-top: 6px;
  padding-right: 15px;
  font-size: 14px;
  line-height: 20px;
  text-align: right;
  color: #616161;
}
.logo-box {
  box-sizing: border-box;
  width: 143px;
  height: 107px;
  margin: 31px 0 0 18px;
  border: 1px solid #e0e0e0;
  border-radius: 6px;
}
.mail-para {
  box-sizing: border-box;
  width: 575px;
  height: 50px;
  margin: 47px 0 0 79px;
  text-align: right;
}
.mail-tail {
  font-size: 17px;
  font-weight: 700;
  line-height: 48px;
}
.hl-line {
  width: 394px;
  height: 30px;
  margin: 136px 0 0 79px;
  background-color: #ff0;
}
.hl-end {
  width: 11px;
  height: 25px;
  margin: 19px 0 0 661px;
  font-size: 15px;
  font-weight: 700;
  line-height: 25px;
  color: #242424;
  background-color: #ff0;
}
.read-scroller {
  box-sizing: border-box;
  width: 28px;
  padding-top: 13px;
  border-left: 2px solid #e8e8e8;
}
.read-scroller .sc-thumb {
  height: 156px;
  margin-top: 53px;
}

/* overlays */
.hide {
  position: absolute;
  background-color: #c2c2c2;
}
.h-url {
  top: 4px;
  left: 588px;
  width: 799px;
  height: 28px;
}
.h-bookmarks {
  top: 43px;
  left: 78px;
  width: 1140px;
  height: 60px;
}
.h-account {
  top: 465px;
  left: 119px;
  width: 112px;
  height: 22px;
}
.h-folder1 {
  top: 569px;
  left: 114px;
  width: 231px;
  height: 24px;
}
.h-folder2 {
  top: 683px;
  left: 112px;
  width: 191px;
  height: 91px;
}
.h-folder3 {
  top: 818px;
  left: 116px;
  width: 216px;
  height: 42px;
}
.h-list {
  top: 439px;
  left: 439px;
  width: 641px;
  height: 446px;
}
.h-sender {
  top: 383px;
  left: 1150px;
  width: 486px;
  height: 64px;
}
.h-logo {
  top: 454px;
  left: 1159px;
  width: 138px;
  height: 108px;
}
.h-text1 {
  top: 604px;
  left: 1218px;
  width: 569px;
  height: 69px;
}
.h-text2 {
  top: 700px;
  left: 1219px;
  width: 600px;
  height: 76px;
}
.h-text3 {
  top: 800px;
  left: 1216px;
  width: 582px;
  height: 90px;
}
.pen {
  position: absolute;
  top: 0;
  left: 0;
}
```
